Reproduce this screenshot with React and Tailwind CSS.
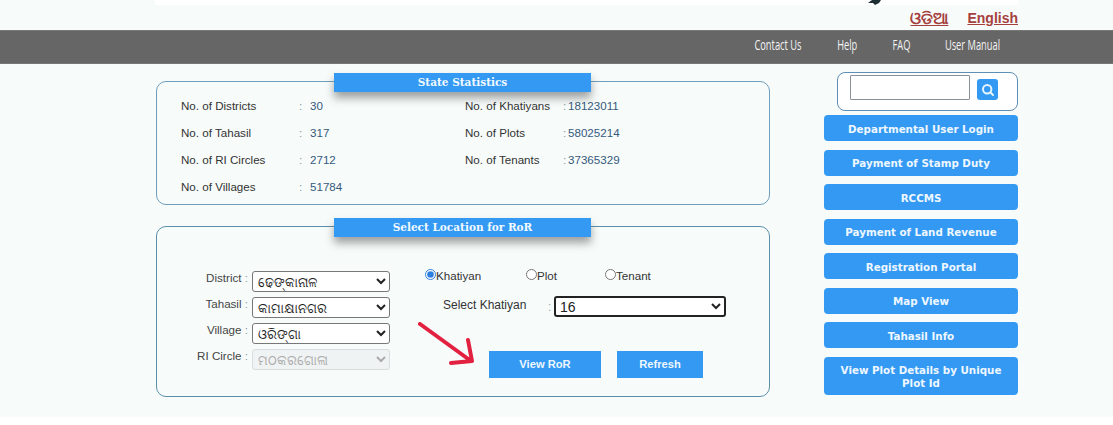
import React from "react";

const sans = "font-['Liberation_Sans',Arial,sans-serif]";
const menu = ["Departmental User Login", "Payment of Stamp Duty", "RCCMS", "Payment of Land Revenue", "Registration Portal", "Map View", "Tahasil Info"];
const nav = [["Contact Us", "w-[48px]"], ["Help", "w-[19px]"], ["FAQ", "w-[16px]"], ["User Manual", "w-[54px]"]];
const leftStats = [["No. of Districts", "30"], ["No. of Tahasil", "317"], ["No. of RI Circles", "2712"], ["No. of Villages", "51784"]];
const rightStats = [["No. of Khatiyans", "18123011"], ["No. of Plots", "58025214"], ["No. of Tenants", "37365329"]];
const selects = [["District", "ଢେଙ୍କାନାଳ"], ["Tahasil", "କାମାକ୍ଷାନଗର"], ["Village", "ଓରିଙ୍ଗା"], ["RI Circle", "ମଠକରଗୋଳା"]];

function Title({ children, className }) {
  return (
    <div className={"absolute left-[177px] w-[257px] h-[19px] pt-[1px] flex items-center justify-center bg-[#3399f3] text-[#f2f9ff] text-[10.5px] font-bold font-['DejaVu_Serif',serif] shadow-[0_6px_8px_rgba(70,70,70,0.5)] " + className}>
      {children}
    </div>
  );
}

function Stat({ label, value, colon, val }) {
  return (
    <div className="h-[27px] flex items-center text-[11.6px]">
      <span className={"text-[#333] " + colon}>{label}</span>
      <span className={"text-[#8a9a9a] " + val}>:</span>
      <span className="text-[#36597c]">{value}</span>
    </div>
  );
}

export default function App() {
  return (
    <div className={"h-[425px] bg-white overflow-hidden " + sans}>
      <div className="h-[417px] bg-[#f7fcfb]">
        <div className="h-[5px] ml-[155px] w-[863px] bg-white relative">
          <svg className="absolute left-[712px] top-0" width="16" height="5" viewBox="0 0 16 5">
            <path d="M1 3 L5 0 L14 0 L12 3 L8 5 L6 3 Z" fill="#1d2f33" />
          </svg>
        </div>
        <div className="h-[25px] w-[1018px] flex justify-end items-center gap-[19px] pt-[1px]">
          <a className="text-[16px] font-bold text-[#a6403f] underline font-['Noto_Sans','DejaVu_Sans',sans-serif]">ଓଡିଆ</a>
          <a className="text-[14px] font-bold text-[#a6403f] underline">English</a>
        </div>
        <div className="h-[34px] bg-[#666666] border-y border-[#777] flex items-center justify-end w-full pr-[114px] gap-[36px]">
          {nav.map(([n, w]) => (
            <span key={n} className={"flex justify-center text-[#f4f4f4] text-[15px] font-medium whitespace-nowrap -mt-[6px] " + w}>
              <span className="inline-block scale-x-[0.62] font-['Open_Sans',sans-serif]">{n}</span>
            </span>
          ))}
        </div>

        <div className="flex ml-[155px] w-[863px] justify-between">
          <div className="w-[614px] ml-[1px]">
            <section className="relative mt-[17px] h-[124px] rounded-[10px] border border-[#6f9dbb] pt-[10px] pl-[24px] flex">
              <Title className="-top-[9px]">State Statistics</Title>
              <div className="w-[284px]">
                {leftStats.map(([l, v]) => <Stat key={l} label={l} value={v} colon="w-[118px]" val="w-[11px]" />)}
              </div>
              <div>
                {rightStats.map(([l, v]) => <Stat key={l} label={l} value={v} colon="w-[98px]" val="w-[5px]" />)}
              </div>
            </section>

            <section className="relative mt-[21px] h-[171px] rounded-[10px] border border-[#5b8fa8] flex pl-[20px] pt-[41px]">
              <Title className="-top-[9px]">Select Location for RoR</Title>
              <div className="w-[213px] pt-[3px] flex flex-col gap-[5px]">
                {selects.map(([l, v], i) => (
                  <div key={l} className="flex h-[21px] items-center justify-end">
                    <span className="text-[11.6px] text-[#444] -mt-[7px] whitespace-nowrap">{l} <span className="text-[#8a9a9a]">:</span></span>
                    <select disabled={i === 3} defaultValue={v} className={"ml-[4px] w-[138px] h-[21px] rounded-[3px] border text-[13px] pl-[1px] font-['Noto_Sans','DejaVu_Sans',sans-serif] " + (i === 3 ? "border-[#d8dddd] bg-[#f0f3f3] text-[#aaa]" : "border-[#777] bg-white text-[#222]")}>
                      <option>{v}</option>
                    </select>
                  </div>
                ))}
              </div>
              <div className="ml-[35px] w-[320px] flex flex-col">
                <div className="flex h-[15px] items-center text-[11.6px] text-[#333]">
                  <label className="w-[101px] flex items-center"><input type="radio" name="k" defaultChecked className="w-[11px] h-[11px] m-0 accent-[#2f7fe0] -mt-[3px]" /><span>Khatiyan</span></label>
                  <label className="w-[79px] flex items-center"><input type="radio" name="k" className="w-[11px] h-[11px] m-0 -mt-[3px]" /><span>Plot</span></label>
                  <label className="flex items-center"><input type="radio" name="k" className="w-[11px] h-[11px] m-0 -mt-[3px]" /><span>Tenant</span></label>
                </div>
                <div className="flex h-[21px] mt-[13px] items-center pl-[18px] text-[12px] text-[#333]">
                  <span className="w-[105px] -mt-[3px]">Select Khatiyan</span>
                  <span className="w-[6px] text-[#9aa]">:</span>
                  <select defaultValue="16" className="w-[172px] h-[21px] rounded-[3px] border-2 border-[#222] bg-white text-[14px] text-[#222]">
                    <option>16</option>
                  </select>
                </div>
                <div className="flex mt-[34px] ml-[64px] gap-[16px]">
                  <button className="w-[112px] h-[27px] pb-[1px] bg-[#3399f3] text-[#eef7ff] text-[11.2px] font-bold">View RoR</button>
                  <button className="w-[86px] h-[27px] pb-[1px] bg-[#3399f3] text-[#eef7ff] text-[11.2px] font-bold">Refresh</button>
                </div>
              </div>
              <svg className="absolute left-[261px] top-[95px]" width="60" height="46" viewBox="0 0 60 46" fill="none">
                <path d="M2 2 L53 39 M33 41 L54 39 L50 18" stroke="#e2203f" strokeWidth="4" strokeLinecap="round" strokeLinejoin="round" />
              </svg>
            </section>
          </div>

          <aside className="w-[194px] mt-[8px] flex flex-col gap-[8.5px]">
            <div className="ml-[13px] h-[39px] rounded-[8px] border border-[#5f8fb5] bg-white flex pl-[12px] gap-[7px]">
              <input className="w-[120px] h-[25px] mt-[2px] bg-white border border-[#8a9097] rounded-[1px]" />
              <button className="w-[21px] h-[21px] mt-[6px] bg-[#3399f3] rounded-[3px] flex items-center justify-center" aria-label="Search">
                <svg width="14" height="14" viewBox="0 0 14 14" fill="none" stroke="#e8f5ff" strokeWidth="2" strokeLinecap="round"><circle cx="6.2" cy="6.2" r="4.2" /><path d="M9.5 9.5 L12 12" /></svg>
              </button>
            </div>
            <div className="-mt-[4.5px] flex flex-col gap-[8.5px]">
              {menu.map((m) => (
                <a key={m} className="h-[26px] pt-[3px] rounded-[4px] bg-[#3399f3] text-[#eef7ff] text-[10.3px] font-bold font-['DejaVu_Sans',sans-serif] flex items-center justify-center">{m}</a>
              ))}
              <a className="h-[38px] pt-[2px] rounded-[4px] bg-[#3399f3] text-[#eef7ff] text-[10.3px] leading-[13px] font-bold font-['DejaVu_Sans',sans-serif] flex items-center justify-center text-center px-[10px]">View Plot Details by Unique Plot Id</a>
            </div>
          </aside>
        </div>
      </div>
    </div>
  );
}
